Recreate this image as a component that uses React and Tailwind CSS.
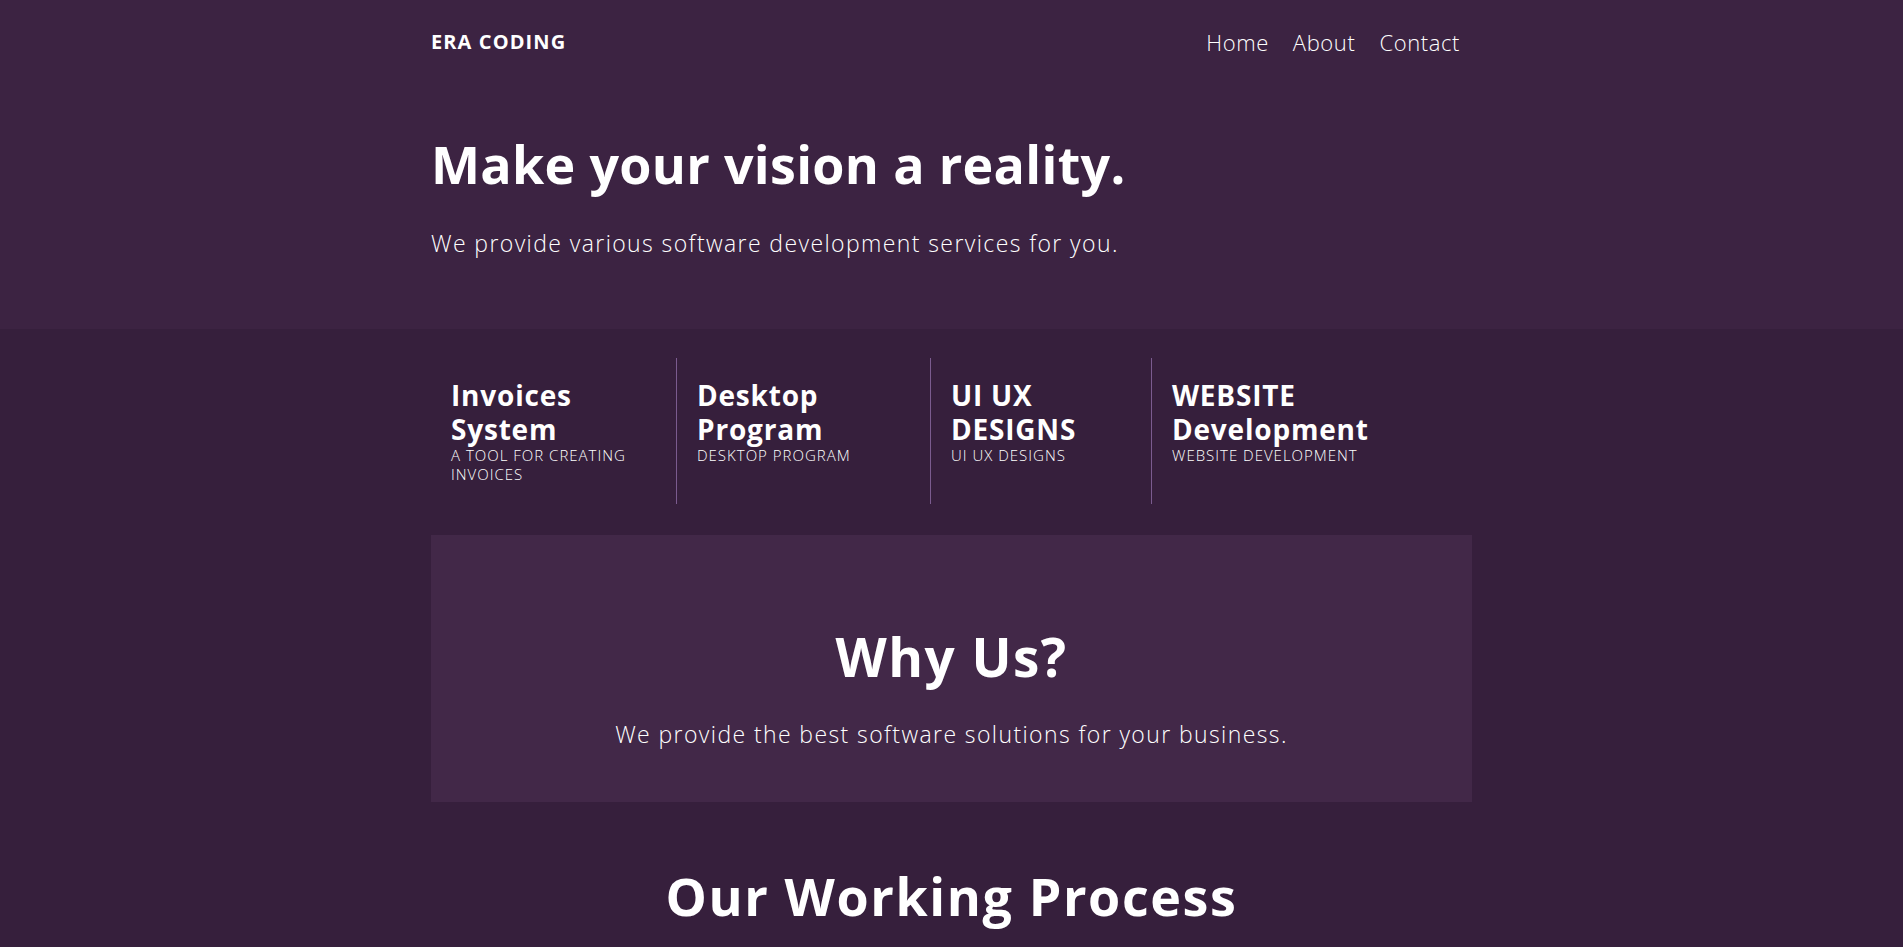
const services = [
  { title: 'Invoices System', sub: 'A TOOL FOR CREATING INVOICES', w: 'w-[245px]' },
  { title: 'Desktop Program', sub: 'DESKTOP PROGRAM', w: 'w-[254px]' },
  { title: 'UI UX DESIGNS', sub: 'UI UX DESIGNS', w: 'w-[221px]' },
  { title: 'WEBSITE Development', sub: 'WEBSITE DEVELOPMENT', w: 'flex-1' },
];

export default function App() {
  return (
    <div className="min-h-screen bg-[#361f3c] text-white font-['Open_Sans','Liberation_Sans',sans-serif]">
      {/* Hero */}
      <section className="bg-[#3c2342] pb-[68px]">
        <div className="max-w-[1041px] mx-auto">
          <header className="h-[84px] flex items-center justify-between">
            <span className="text-[20px] font-bold tracking-[1.1px]">ERA CODING</span>
            <nav className="flex text-[22px] font-light tracking-[0.6px] text-white">
              <a className="px-3">Home</a>
              <a className="px-3">About</a>
              <a className="px-3">Contact</a>
            </nav>
          </header>
          <h1 className="mt-[49px] text-[52px] leading-[1.2] font-bold tracking-[0.3px]">Make your vision a reality.</h1>
          <p className="mt-[31px] text-[23px] leading-[1.5] font-light tracking-[1.4px]">
            We provide various software development services for you.
          </p>
        </div>
      </section>

      {/* Services */}
      <div className="max-w-[1041px] mx-auto pt-[29px]">
        <div className="flex">
          {services.map((s, i) => (
            <div
              key={s.title}
              className={`${s.w} p-5 ${i > 0 ? 'border-l border-[#7b5b8f]' : ''}`}
            >
              <h3 className="text-[28px] leading-[34px] font-bold tracking-[0.8px]">{s.title}</h3>
              <p className="text-[15px] leading-[19px] font-light tracking-[1px]">{s.sub}</p>
            </div>
          ))}
        </div>

        {/* Why Us */}
        <div className="mt-[31px] bg-[#422848] pt-[90px] pb-[50px] text-center">
          <h2 className="text-[53px] leading-[1.2] font-bold tracking-[1.5px]">Why Us?</h2>
          <p className="mt-[29px] text-[23px] leading-[1.5] font-light tracking-[1.4px]">
            We provide the best software solutions for your business.
          </p>
        </div>

        <h2 className="mt-[63px] text-[52px] leading-[1.2] font-bold tracking-[1.6px] text-center pb-10">Our Working Process</h2>
      </div>
    </div>
  );
}
